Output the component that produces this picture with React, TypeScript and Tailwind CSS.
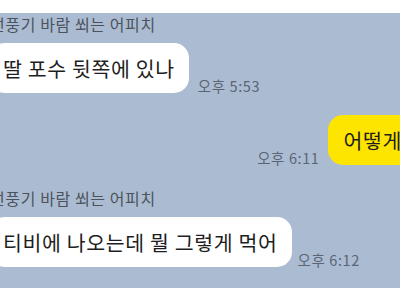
const font = { fontFamily: '"Noto Sans CJK KR", "Noto Sans", sans-serif' };

function Time({ children }: { children: string }) {
  return (
    <span className="text-[14.5px] leading-[16px] tracking-[0.6px] text-[#5b6474] whitespace-nowrap mb-[-1px]">
      {children}
    </span>
  );
}

function Bubble({ children, yellow }: { children: string; yellow?: boolean }) {
  return (
    <div
      className={
        yellow
          ? "bg-[#fee500] rounded-[15px] pl-[15px] pr-[24px] py-[12px] text-[20.5px] leading-[26px] tracking-[0.65px] text-[#1e1e1e] whitespace-nowrap"
          : "bg-white rounded-[15px] pl-[13px] pr-[14px] py-[12px] text-[20.5px] leading-[26px] tracking-[0.65px] text-[#1e1e1e] whitespace-nowrap"
      }
    >
      {children}
    </div>
  );
}

export default function App() {
  return (
    <div
      className="w-[400px] h-[300px] overflow-hidden bg-white flex flex-col"
      style={font}
    >
      <div className="h-[13px] bg-white" />
      <div className="h-[275px] bg-[#abbcd2] flex flex-col ml-[-10px]">
        <div className="mt-[1px] text-[16px] leading-[20px] tracking-[0.6px] text-[#4d535c] whitespace-nowrap">
          선풍기 바람 쐬는 어피치
        </div>
        <div className="mt-[9px] flex items-end gap-[9px]">
          <Bubble>딸 포수 뒷쪽에 있나</Bubble>
          <Time>오후 5:53</Time>
        </div>
        <div className="mt-[22px] flex items-end justify-end gap-[9px] mr-[-26px]">
          <Time>오후 6:11</Time>
          <Bubble yellow>어떻게</Bubble>
        </div>
        <div className="mt-[23px] text-[16px] leading-[20px] tracking-[0.6px] text-[#4d535c] whitespace-nowrap">
          선풍기 바람 쐬는 어피치
        </div>
        <div className="mt-[9px] flex items-end gap-[6px]">
          <Bubble>티비에 나오는데 뭘 그렇게 먹어</Bubble>
          <Time>오후 6:12</Time>
        </div>
      </div>
      <div className="flex-1 bg-white" />
    </div>
  );
}
